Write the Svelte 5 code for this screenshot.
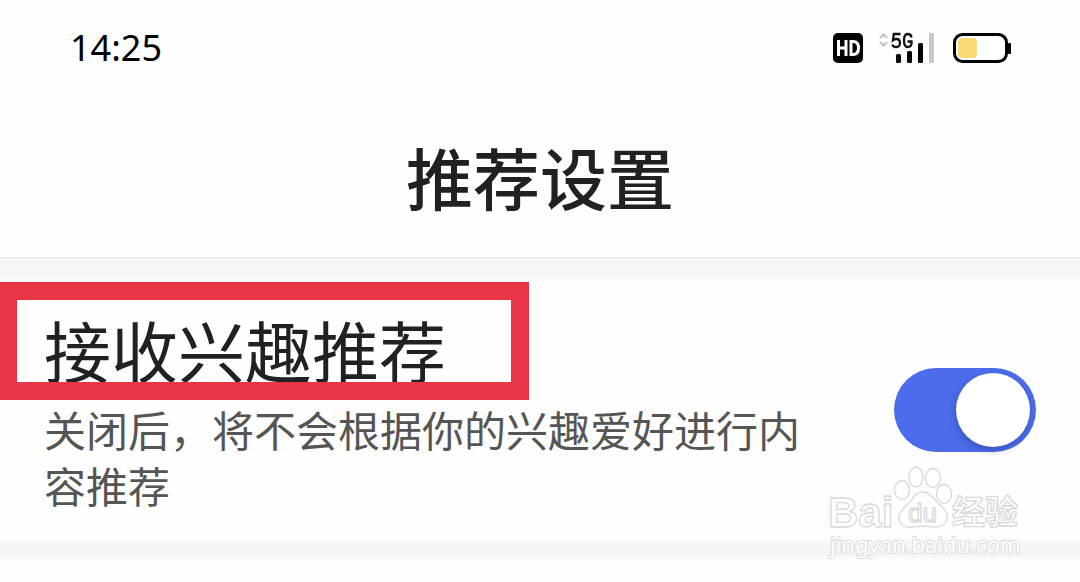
<script lang="ts">
  let enabled = $state(true);
</script>

<div class="screen">
  <div class="status">
    <time class="clock">14:25</time>
    <div class="indicators">
      <svg class="hd" width="30" height="30" viewBox="0 0 30 30" role="img" aria-label="HD">
        <rect width="30" height="30" rx="5" fill="#000" />
        <path d="M5.500 7V23M13 7V23M5.500 15H13" fill="none" stroke="#fff" stroke-width="3" />
        <path d="M18 8.500H20Q25.500 8.500 25.500 15T20 21.500H18Z" fill="none" stroke="#fff" stroke-width="3" />
      </svg>
      <svg class="signal" width="58" height="34" viewBox="0 0 58 34" role="img" aria-label="5G">
        <path d="M1 7L4.500 3.500L8 7M1 11L4.500 14.500L8 11" fill="none" stroke="#c4c4c4" stroke-width="2.400" />
        <path d="M21.500 3H14.800L14 9.200Q15.500 8 17.500 8Q21 8 21 12T17 16Q14 16 13.300 13.500" fill="none" stroke="#111" stroke-width="2.300" />
        <path d="M32.500 6.500Q32 3 28.700 3Q25 3 25 9.500T28.700 16Q32.500 16 32.500 12V10.500H28.500" fill="none" stroke="#111" stroke-width="2.300" />
        <rect x="17" y="23" width="5" height="9" rx="1.500" />
        <rect x="28" y="20" width="5" height="12" rx="1.500" />
        <rect x="39" y="12" width="5" height="20" rx="1.500" />
        <rect x="50" y="2" width="5" height="30" rx="1" fill="#c8c8c8" />
      </svg>
      <svg class="battery" width="59" height="32" viewBox="0 0 59 32" role="img" aria-label="Battery">
        <rect x="1.500" y="2.500" width="52" height="27" rx="8" fill="#fff" stroke="#000" stroke-width="3" />
        <rect x="5" y="6" width="19" height="20" rx="4" fill="#f9da74" />
        <rect x="55" y="11" width="3" height="11" rx="1" />
      </svg>
    </div>
  </div>

  <header><h1>推荐设置</h1></header>

  <main>
    <section class="row">
      <div class="copy">
        <label for="interest">接收兴趣推荐</label>
        <p id="interest-note">关闭后，将不会根据你的兴趣爱好进行内容推荐</p>
      </div>
      <input
        id="interest"
        class="switch"
        type="checkbox"
        role="switch"
        aria-describedby="interest-note"
        bind:checked={enabled}
      />
      <div class="highlight"></div>
    </section>
    <div class="divider"></div>
  </main>

  <svg class="watermark" width="210" height="96" viewBox="0 0 210 96">
    <g fill="#fff" stroke="#d9d9d9" stroke-width="1.300">
      <text class="brand" x="2" y="63">Bai</text>
      <ellipse cx="76" cy="26" rx="7.500" ry="9.500" />
      <ellipse cx="90" cy="13" rx="7" ry="10" />
      <ellipse cx="107" cy="14" rx="7.500" ry="9.500" />
      <ellipse cx="118" cy="30" rx="7.500" ry="9.500" />
      <path d="M97 28C90 28 87 34 83 39C77 44 72 49 73 55C74 62 80 64 87 63C94 62 101 62 107 63C114 64 120 61 121 54C122 48 117 43 111 38C107 34 104 28 97 28Z" />
      <text class="du" x="82" y="58">du</text>
      <text class="cn" x="126" y="60">经验</text>
    </g>
    <text class="url" x="4" y="89">jingyan.baidu.com</text>
  </svg>
</div>

<style>
  :global(body) {
    margin: 0;
    background: #fefefe;
  }
  .screen {
    position: relative;
    min-height: 100vh;
    overflow: hidden;
    font-family: "Noto Sans CJK SC", "Noto Sans", sans-serif;
    color: #202123;
  }
  .status {
    display: flex;
    align-items: center;
    justify-content: space-between;
    height: 96px;
    padding: 0 68px 0 70px;
  }
  .clock {
    font-family: "Noto Sans", sans-serif;
    font-size: 36px;
    line-height: 48px;
    color: #000;
  }
  .indicators {
    display: flex;
    align-items: center;
    gap: 16px;
  }
  header {
    display: flex;
    justify-content: center;
    padding: 32px 0 33px;
    border-bottom: 1px solid #e2e2e2;
  }
  h1 {
    margin: 0;
    font-size: 67px;
    line-height: 96px;
    font-weight: 500;
  }
  main {
    border-top: 21px solid #f5f5f5;
  }
  .row {
    position: relative;
    display: flex;
    align-items: center;
    justify-content: space-between;
    gap: 48px;
    padding: 20px 44px 26px;
  }
  .copy {
    max-width: 764px;
  }
  label {
    display: block;
    font-size: 67px;
    line-height: 100px;
  }
  p {
    margin: 2px 0 0;
    font-size: 42px;
    line-height: 56px;
    color: #555;
  }
  .switch {
    appearance: none;
    display: flex;
    flex: none;
    align-items: center;
    width: 142px;
    height: 84px;
    margin: 8px 0 0;
    padding: 0 6px;
    border-radius: 42px;
    background: #ccc;
  }
  .switch:checked {
    justify-content: flex-end;
    background: #4c6cec;
  }
  .switch::before {
    content: "";
    width: 74px;
    height: 74px;
    border-radius: 50%;
    background: #fff;
    box-shadow: -1px 3px 7px #1c348070;
  }
  .highlight {
    position: absolute;
    top: 3px;
    left: 0;
    box-sizing: border-box;
    width: 49%;
    height: 118px;
    border: 18px solid #e93548;
    border-left-width: 17px;
    pointer-events: none;
  }
  .divider {
    height: 22px;
    background: linear-gradient(#f9f9f9, #f3f3f3 60%, #fcfcfc);
  }
  .watermark {
    position: absolute;
    right: 44px;
    bottom: 22px;
    pointer-events: none;
  }
  .brand {
    font: bold 42px "Liberation Sans", sans-serif;
  }
  .du {
    font: 26px "Liberation Sans", sans-serif;
  }
  .cn {
    font: bold 33px "Noto Sans CJK SC", sans-serif;
  }
  .url {
    font: 22px "Noto Sans", sans-serif;
    fill: #fff;
    stroke: #dcdcdc;
    stroke-width: 2px;
    paint-order: stroke;
  }
</style>
